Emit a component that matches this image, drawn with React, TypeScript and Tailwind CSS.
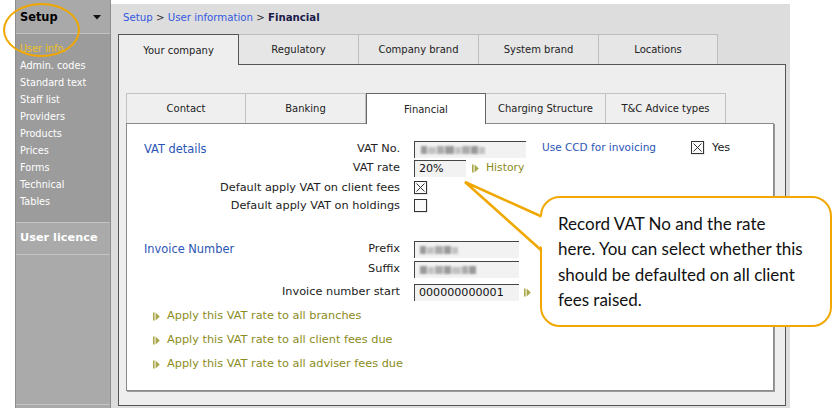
import React from "react";

const OLIVE = "#8b8b22";

const Arrow = () => (
  <svg width="7" height="9" viewBox="0 0 7 9" className="shrink-0">
    <rect x="0" y="0.5" width="1.6" height="8" fill="#a8a84a" />
    <path d="M2.6 0.5 L6.8 4.5 L2.6 8.5 Z" fill="#a8a84a" />
  </svg>
);

const Check = ({ checked }: { checked?: boolean }) => (
  <svg width="14" height="14" viewBox="0 0 14 14" className="shrink-0">
    <rect x="0" y="0" width="14" height="14" fill="#e8e8e8" />
    <rect x="0.5" y="0.5" width="12" height="12" fill="#fafafa" stroke="#333" />
    {checked && <path d="M2.5 2.5 L10.5 10.5 M10.5 2.5 L2.5 10.5" stroke="#333" strokeWidth="1" />}
  </svg>
);

const Blur = ({ widths }: { widths: number[] }) => (
  <div className="flex items-center gap-[1px] blur-[1.2px]">
    {widths.map((w, i) => (
      <div
        key={i}
        className={i % 3 === 0 ? "h-[8px] bg-[#9a9a9a]" : i % 3 === 1 ? "h-[7px] bg-[#c2c2c2]" : "h-[8px] bg-[#ababab]"}
        style={{ width: w }}
      />
    ))}
  </div>
);

const Input = ({ w, children }: { w: string; children?: React.ReactNode }) => (
  <div className={`${w} shrink-0 h-[17px] border-t border-l border-[#444] bg-[#f2f2f2] flex items-center pl-[4px] text-[11.1px] text-[#111] overflow-hidden`}>
    {children}
  </div>
);

function Sidebar() {
  const items = ["Admin. codes", "Standard text", "Staff list", "Providers", "Products", "Prices", "Forms", "Technical", "Tables"];
  return (
    <div className="w-[96px] shrink-0 h-[408px] flex flex-col bg-[#9c9c9c] border-l border-r border-[#8e8e8e]">
      <div className="h-[34px] shrink-0 bg-[#a9a9a9] border-b border-[#c2c2c2] flex items-center justify-between pl-[4px] pr-[9px] pt-[2px]">
        <span className="font-bold text-[11.4px] text-black">Setup</span>
        <svg width="8" height="5" viewBox="0 0 8 5">
          <path d="M0 0 H8 L4 4.5 Z" fill="#111" />
        </svg>
      </div>
      <div className="h-[188px] shrink-0 pt-[6px] pl-[4px] text-[9.7px] leading-[17px] text-white flex flex-col">
        <span className="text-[#f2c21c]">User info.</span>
        {items.map((t) => (
          <span key={t}>{t}</span>
        ))}
      </div>
      <div className="h-[33px] shrink-0 bg-[#aaaaaa] border-t border-b border-[#c4c4c4] flex items-center pl-[4px] font-bold text-[11.3px] text-white">
        User licence
      </div>
      <div className="h-[150px] shrink-0 bg-[#aaaaaa] border-b border-[#c4c4c4]" />
      <div className="flex-1 bg-[#aaaaaa]" />
    </div>
  );
}

function OuterTabs() {
  const tabs = [
    { t: "Your company", w: "w-[121px]", a: true },
    { t: "Regulatory", w: "w-[120px]" },
    { t: "Company brand", w: "w-[120px]" },
    { t: "System brand", w: "w-[120px]" },
    { t: "Locations", w: "w-[119px]" },
  ];
  return (
    <div className="h-[30px] flex items-start shrink-0">
      {tabs.map((tab) =>
        tab.a ? (
          <div key={tab.t} className={`${tab.w} relative z-10 h-[31px] bg-[#eeeeee] border border-b-0 border-[#555] flex items-center justify-center text-[10px] text-[#222]`}>
            {tab.t}
          </div>
        ) : (
          <div key={tab.t} className={`${tab.w} h-[30px] bg-[#e6e6e6] border-t border-r border-[#bdbdbd] flex items-center justify-center text-[10px] text-[#222]`}>
            {tab.t}
          </div>
        )
      )}
    </div>
  );
}

function InnerTabs() {
  const tabs = ["Contact", "Banking", "Financial", "Charging Structure", "T&C Advice types"];
  return (
    <div className="h-[30px] flex items-start shrink-0">
      {tabs.map((t, i) =>
        i === 2 ? (
          <div key={t} className="w-[120px] relative z-10 h-[31px] bg-white border border-b-0 border-[#666] flex items-center justify-center text-[10px] text-[#222]">
            {t}
          </div>
        ) : (
          <div
            key={t}
            className={`w-[120px] h-[30px] bg-[#efefef] border-t border-r border-[#c2c2c2] ${i === 0 ? "border-l" : ""} flex items-center justify-center text-[10px] text-[#222]`}
          >
            {t}
          </div>
        )
      )}
    </div>
  );
}

const Row = ({ h, head, label, children, align = "items-center" }: { h: string; head?: string; label: string; children: React.ReactNode; align?: string }) => (
  <div className={`${h} flex ${align}`}>
    <div className="w-[256px] shrink-0 flex justify-between items-center h-[17px]">
      <span className="text-[11.4px] text-[#2a55b5]">{head ?? ""}</span>
      <span className="text-[11.3px] text-[#222]">{label}</span>
    </div>
    <div className="ml-[14px] shrink-0 flex items-center">{children}</div>
  </div>
);

function Form() {
  return (
    <div className="pl-[17px] pt-[17px] flex">
      <div className="w-[383px] shrink-0 flex flex-col">
        <Row h="h-[19px]" head="VAT details" label="VAT No." align="items-start">
          <Input w="w-[112px]">
            <div className="ml-[2px]">
              <Blur widths={[6, 8, 7, 9, 6, 8, 7, 6]} />
            </div>
          </Input>
        </Row>
        <Row h="h-[19px]" label="VAT rate" align="items-start">
          <Input w="w-[52px]">20%</Input>
          <div className="ml-[6px] flex items-center">
            <Arrow />
            <span className="ml-[7px] text-[10.8px]" style={{ color: OLIVE }}>
              History
            </span>
          </div>
        </Row>
        <Row h="h-[18px]" label="Default apply VAT on client fees">
          <Check checked />
        </Row>
        <Row h="h-[18px]" label="Default apply VAT on holdings">
          <Check />
        </Row>
        <div className="h-[26px]" />
        <Row h="h-[20px]" head="Invoice Number" label="Prefix" align="items-start">
          <Input w="w-[105px]">
            <div className="ml-[1px]">
              <Blur widths={[6, 7, 8, 7, 6]} />
            </div>
          </Input>
        </Row>
        <Row h="h-[20px]" label="Suffix" align="items-start">
          <Input w="w-[105px]">
            <div className="ml-[1px]">
              <Blur widths={[7, 6, 8, 7, 9, 6, 7]} />
            </div>
          </Input>
        </Row>
        <Row h="h-[20px]" label="Invoice number start" align="items-end">
          <Input w="w-[105px]">000000000001</Input>
          <div className="ml-[5px]">
            <Arrow />
          </div>
        </Row>
        <div className="mt-[3px] flex flex-col">
          {["Apply this VAT rate to all branches", "Apply this VAT rate to all client fees due", "Apply this VAT rate to all adviser fees due"].map((t) => (
            <div key={t} className="h-[24px] flex items-center pl-[9px]">
              <Arrow />
              <span className="ml-[7px] text-[11.3px]" style={{ color: OLIVE }}>
                {t}
              </span>
            </div>
          ))}
        </div>
      </div>
      <div className="ml-[15px] flex items-center h-[14px]">
        <span className="w-[149px] text-[10.5px] text-[#2a55b5]">Use CCD for invoicing</span>
        <Check checked />
        <span className="ml-[7px] text-[11.3px] text-[#222]">Yes</span>
      </div>
    </div>
  );
}

function Main() {
  return (
    <div className="w-[679px] shrink-0 mt-[4px] h-[404px] bg-[#dddddd] pl-[7px] flex flex-col">
      <div className="h-[30px] shrink-0 pl-[5px] pt-[7px] text-[10.2px] leading-[13px]">
        <span className="text-[#3558e0]">Setup</span>
        <span className="text-[#333]"> &gt; </span>
        <span className="text-[#3558e0]">User information</span>
        <span className="text-[#333]"> &gt; </span>
        <span className="font-bold text-[#1a1a4a]">Financial</span>
      </div>
      <OuterTabs />
      <div className="w-[668px] h-[342px] shrink-0 border border-[#555] bg-[#eeeeee] pl-[7px] pt-[28px] flex flex-col">
        <InnerTabs />
        <div className="w-[648px] h-[268px] shrink-0 bg-white border border-[#8a8a8a] shadow-[1px_1px_0_#9a9a9a]">
          <Form />
        </div>
      </div>
    </div>
  );
}

export default function App() {
  return (
    <div className="relative w-[835px] h-[408px] bg-white overflow-hidden flex font-['DejaVu_Sans',sans-serif] text-[#222]">
      <div className="w-[15px] shrink-0" />
      <Sidebar />
      <Main />
      <div className="absolute left-[3px] top-[3px] w-[77px] h-[54px] rounded-[50%] border-2 border-[#f0a800]" />
      <div className="absolute left-[540px] top-[196px] w-[292px] h-[131px] border-[2.5px] border-[#f0a800] rounded-[20px] bg-white pl-[16px] pt-[13px] font-['Lato',sans-serif] text-[17px] leading-[25.3px] text-[#111]">
        Record VAT No and the rate
        <br />
        here. You can select whether this
        <br />
        should be defaulted on all client
        <br />
        fees raised.
      </div>
      <svg className="absolute left-[455px] top-[175px]" width="95" height="85" viewBox="0 0 95 85">
        <polygon points="90,42 10,7 90,75" fill="white" />
        <polyline points="86.5,41.5 10,7 86.5,75.5" fill="none" stroke="#f0a800" strokeWidth="2.5" strokeLinejoin="miter" />
      </svg>
    </div>
  );
}
